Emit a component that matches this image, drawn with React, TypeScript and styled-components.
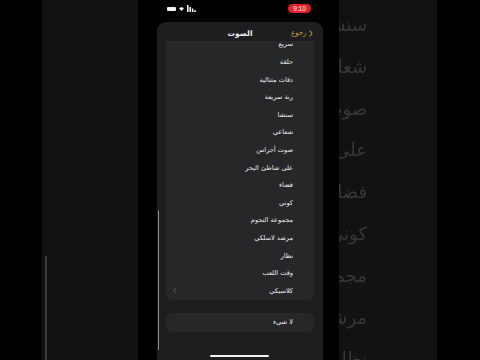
import React from "react";
import styled, { createGlobalStyle } from "styled-components";

const Global = createGlobalStyle`
  html, body { margin: 0; padding: 0; background: #000; }
  body { font-family: "DejaVu Sans", "Noto Sans", sans-serif; }
  * { box-sizing: border-box; }
`;

const Stage = styled.div`
  width: 480px;
  height: 360px;
  display: flex;
  background: #000;
  overflow: hidden;
`;

const Gutter = styled.div<{ $w: number }>`
  width: ${(p) => p.$w}px;
  flex: none;
  background: #000;
`;

const LeftBand = styled.div`
  width: 96px;
  flex: none;
  background: #111112;
  display: flex;
  flex-direction: column;
  padding: 256px 0 0 3px;
`;

const TraceLine = styled.div`
  width: 1.5px;
  flex: 1;
  background: #3c3c3c;
`;

const RightBand = styled.div`
  width: 98px;
  flex: none;
  background: #121213;
  display: flex;
  flex-direction: column;
`;

const GhostList = styled.div`
  width: 28px;
  overflow: hidden;
  direction: rtl;
  padding-top: 4px;
  display: flex;
  flex-direction: column;
  filter: blur(0.7px);
`;

const GhostItem = styled.div`
  height: 41.8px;
  line-height: 41.8px;
  font-size: 18px;
  color: #383838;
  white-space: nowrap;
  text-align: right;
`;

const Phone = styled.div`
  width: 166px;
  flex: none;
  display: flex;
  flex-direction: column;
  position: relative;
`;

const StatusBar = styled.div`
  height: 22px;
  flex: none;
  display: flex;
  justify-content: space-between;
  align-items: flex-start;
  padding: 0 12px 0 10px;
  background: #000;
`;

const StatusIcons = styled.div`
  display: flex;
  align-items: center;
  gap: 3px;
  margin-top: 5px;
`;

const Battery = styled.div`
  width: 9px;
  height: 4px;
  background: #f2f2f2;
  border-radius: 1px;
`;

const TimePill = styled.div`
  margin-top: 3.5px;
  width: 23px;
  height: 9px;
  border-radius: 5px;
  background: #e2232c;
  color: #fff;
  font-size: 6.5px;
  line-height: 9px;
  text-align: center;
  font-family: "Liberation Sans", sans-serif;
`;

const Sheet = styled.div`
  flex: 1;
  background: #1e1e20;
  border-radius: 9px 9px 0 0;
  display: flex;
  flex-direction: column;
  overflow: hidden;
`;

const NavBar = styled.div`
  height: 19px;
  flex: none;
  display: grid;
  grid-template-columns: 1fr auto 1fr;
  align-items: center;
  direction: rtl;
  padding: 3px 10px 0 10px;
`;

const BackButton = styled.div`
  display: flex;
  align-items: center;
  gap: 2.5px;
  color: #c4a03a;
  font-size: 7px;
`;

const Title = styled.div`
  color: #f0f0f0;
  font-size: 7.5px;
  font-weight: bold;
`;

const Content = styled.div`
  flex: 1;
  overflow: hidden;
  display: flex;
  flex-direction: column;
  padding: 0 9px;
`;

const Card = styled.div<{ $offset: number }>`
  background: #272729;
  border-radius: 7px;
  margin-top: ${(p) => p.$offset}px;
  display: flex;
  flex-direction: column;
  flex: none;
`;

const Row = styled.div<{ $h: number }>`
  height: ${(p) => p.$h}px;
  display: flex;
  align-items: center;
  justify-content: space-between;
  direction: rtl;
  padding: 0 21px 0 7px;
  color: #ececec;
  font-size: 6.6px;
  white-space: nowrap;
`;

const ScrollIndicator = styled.div`
  position: absolute;
  left: 0.5px;
  top: 210px;
  width: 1.5px;
  height: 140px;
  border-radius: 1px;
  background: #8a8a8c;
`;

const HomeIndicator = styled.div`
  position: absolute;
  bottom: 3px;
  left: 53px;
  width: 59px;
  height: 2.5px;
  border-radius: 2px;
  background: #f4f4f4;
`;

const tones = [
  "سريع",
  "حلقة",
  "دقات متتالية",
  "رنة سريعة",
  "سنشا",
  "شعاعي",
  "صوت أجراس",
  "على شاطئ البحر",
  "فضاء",
  "كوني",
  "مجموعة النجوم",
  "مرشد لاسلكي",
  "نظار",
  "وقت اللعب",
  "كلاسيكي",
];

const ghosts = [
  "سنشا",
  "شعاعي",
  "صوت أجراس",
  "على شاطئ",
  "فضاء",
  "كوني",
  "مجموعة",
  "مرشد",
  "نظار",
];

const Wifi = () => (
  <svg width="5" height="4" viewBox="0 0 10 8">
    <path d="M0 2.5 Q5 -1.5 10 2.5 L5 8 Z" fill="#f2f2f2" />
  </svg>
);

const Signal = () => (
  <svg width="9" height="7" viewBox="0 0 9 7">
    <rect x="0" y="0" width="1.6" height="7" fill="#f2f2f2" />
    <rect x="2.4" y="2" width="1.6" height="5" fill="#f2f2f2" />
    <rect x="4.8" y="3.5" width="1.6" height="3.5" fill="#f2f2f2" />
    <rect x="7.2" y="5.2" width="1.6" height="1.8" fill="#f2f2f2" />
  </svg>
);

const ChevronRight = ({ color, w, h }: { color: string; w: number; h: number }) => (
  <svg width={w} height={h} viewBox="0 0 5 9">
    <path d="M1 1 L4 4.5 L1 8" fill="none" stroke={color} strokeWidth="1.3" strokeLinecap="round" strokeLinejoin="round" />
  </svg>
);

const ChevronLeft = () => (
  <svg width="3" height="5" viewBox="0 0 5 9">
    <path d="M4 1 L1 4.5 L4 8" fill="none" stroke="#6a6a6c" strokeWidth="1.4" strokeLinecap="round" strokeLinejoin="round" />
  </svg>
);

export default function App() {
  return (
    <>
      <Global />
      <Stage>
        <Gutter $w={42} />
        <LeftBand>
          <TraceLine />
        </LeftBand>
        <Gutter $w={19} />
        <Phone>
          <StatusBar>
            <StatusIcons>
              <Battery />
              <Wifi />
              <Signal />
            </StatusIcons>
            <TimePill>9:10</TimePill>
          </StatusBar>
          <Sheet>
            <NavBar>
              <BackButton>
                <ChevronRight color="#c4a03a" w={4} h={7} />
                <span>رجوع</span>
              </BackButton>
              <Title>الصوت</Title>
              <span />
            </NavBar>
            <Content>
              <Card $offset={-5.4}>
                {tones.map((t, i) => (
                  <Row key={t} $h={17.6}>
                    <span>{t}</span>
                    {i === tones.length - 1 ? <ChevronLeft /> : null}
                  </Row>
                ))}
              </Card>
              <Card $offset={13.4}>
                <Row $h={19}>
                  <span>لا شيء</span>
                </Row>
              </Card>
            </Content>
          </Sheet>
          <ScrollIndicator />
          <HomeIndicator />
        </Phone>
        <Gutter $w={16} />
        <RightBand>
          <GhostList>
            {ghosts.map((g) => (
              <GhostItem key={g}>{g}</GhostItem>
            ))}
          </GhostList>
        </RightBand>
        <Gutter $w={43} />
      </Stage>
    </>
  );
}
